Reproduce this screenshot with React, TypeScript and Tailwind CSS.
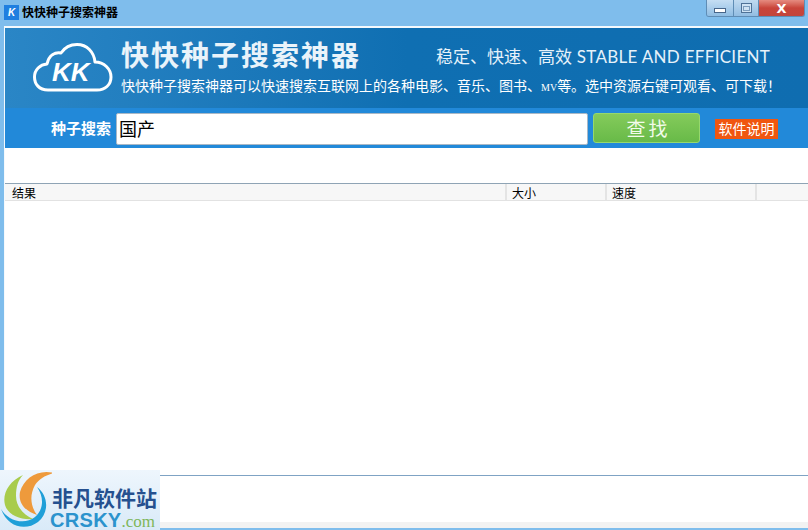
import { useState } from 'react';

const cjk = "font-['Liberation_Sans','Noto_Sans_CJK_SC',sans-serif]";

function CloudLogo() {
  return (
    <svg width="80" height="52" viewBox="0 0 80 52" fill="none" className="mt-[2px]">
      <path
        d="M15 47 C6 47 1.500 41 1.500 34 C1.500 27 7 21.500 14 21 C16 12 22 9 28 10 C32 4 38 1.500 44 1.500 C54 1.500 61 9 62 19 C71 19 78 26 78 34 C78 42 72 47 64 47 Z"
        stroke="white"
        strokeWidth="3"
        strokeLinejoin="round"
      />
      <text x="19" y="38" fill="white" fontSize="26" fontWeight="700" fontStyle="italic" fontFamily="Liberation Sans">
        KK
      </text>
    </svg>
  );
}

function WindowButtons() {
  return (
    <div className="flex h-[17px] border border-t-0 border-[#5f8db5] rounded-b-[3px] overflow-hidden">
      <div className="w-[27px] bg-gradient-to-b from-[#c5def3] to-[#8fbde3] flex items-center justify-center border-r border-[#5f8db5]">
        <div className="w-[12px] h-[5px] mt-[4px] bg-white border border-[#47668a]" />
      </div>
      <div className="w-[25px] bg-gradient-to-b from-[#c0daf0] to-[#92bde2] flex items-center justify-center border-r border-[#5f8db5]">
        <div className="w-[11px] h-[10px] border border-[#4f7297] bg-[#cfe3f4] flex items-center justify-center">
          <div className="w-[7px] h-[5px] border border-[#7d9dbd]" />
        </div>
      </div>
      <div className="w-[45px] bg-gradient-to-b from-[#e58b80] via-[#c9443a] to-[#c2453c] flex items-center justify-center">
        <span className="text-white text-[13px] font-bold leading-none font-['DejaVu_Sans',sans-serif]">X</span>
      </div>
    </div>
  );
}

function Watermark() {
  return (
    <div className="absolute left-0 bottom-0 w-[160px] h-[60px] bg-gradient-to-b from-[#eef6fd] to-[#d9eaf8] flex">
      <svg width="52" height="60" viewBox="0 0 52 60" className="shrink-0">
        <path d="M23 5 C9 11 2 24 5 35 C8 45 20 50 33 49 C24 45 16 37 16 26 C16 17 18 10 23 5 Z" fill="#a8cc4c" />
        <path d="M54 3 C38 -1 24 8 20 22 C18 33 25 41 37 45 C31 37 29 26 35 15 C39 9 46 5 54 3 Z" fill="#ee9a3c" />
        <path d="M37 17 C48 25 50 42 38 52 C26 61 8 58 1 39 C7 50 24 56 35 47 C44 39 44 27 37 17 Z" fill="#1f9fd8" />
      </svg>
      <div className="flex flex-col items-start pt-[17px]">
        <span className={`text-[#25508f] text-[21px] leading-[24px] font-bold whitespace-nowrap ${cjk}`}>非凡软件站</span>
        <div className="flex items-baseline leading-[18px] whitespace-nowrap font-['Liberation_Sans',sans-serif] -ml-[2px]">
          <span className="text-[#2b93cd] text-[20px] font-bold tracking-[0.3px]">CRSKY</span>
          <span className="text-[#7fb65a] text-[17px] font-['Liberation_Serif',serif]">.com</span>
        </div>
      </div>
    </div>
  );
}

export default function App() {
  const [query, setQuery] = useState('国产');

  return (
    <div className={`relative w-[808px] h-[530px] bg-[#7fbdec] flex flex-col overflow-hidden ${cjk}`}>
      {/* title bar */}
      <div className="h-[26px] shrink-0 flex items-start justify-between pl-[4px]">
        <div className="flex items-center h-[25px] gap-[3px]">
          <div className="w-[15px] h-[15px] bg-[#1f7fe0] flex items-center justify-center text-white text-[10px] font-bold italic">K</div>
          <span className="text-black text-[12px] font-bold whitespace-nowrap">快快种子搜索神器</span>
        </div>
        <div className="mr-[3px]">
          <WindowButtons />
        </div>
      </div>

      <div className="flex-1 flex flex-col ml-[4px] border-l border-t-2 border-[#f4f9fd] bg-white min-h-0">
        {/* banner */}
        <div className="h-[80px] shrink-0 bg-gradient-to-r from-[#2a86c6] via-[#0f6fb2] to-[#0f6db0] flex items-center pl-[28px]">
          <CloudLogo />
          <div className="ml-[8px] flex flex-col">
            <div className="flex items-center h-[34px] pt-[2px]">
              <span className="text-[#e9f3fa] text-[28px] leading-none font-bold tracking-[2px] whitespace-nowrap w-[315px]">快快种子搜索神器</span>
              <span className="text-[#e6f2fa] text-[17px] leading-none whitespace-nowrap">稳定、快速、高效 <span className="text-[17px] tracking-[0.3px] font-['Lato',sans-serif]">STABLE AND EFFICIENT</span></span>
            </div>
            <span className="text-white text-[14px] leading-[20px] mt-[3px] whitespace-nowrap">
              快快种子搜索神器可以快速搜索互联网上的各种电影、音乐、图书、<span className="text-[10px] font-['Liberation_Serif',serif]">MV</span>等。选中资源右键可观看、可下载！
            </span>
          </div>
        </div>

        {/* search bar */}
        <div className="h-[40px] shrink-0 bg-[#2289d9] flex items-center pt-[2px]">
          <span className="w-[106px] text-right text-white text-[15px] font-bold whitespace-nowrap">种子搜索</span>
          <input
            value={query}
            onChange={(e) => setQuery(e.target.value)}
            className="ml-[5px] w-[472px] h-[32px] bg-white border border-[#a9b8c6] rounded-[2px] pl-[2px] pb-[2px] text-[18px] text-black outline-none"
          />
          <button className="ml-[5px] -mt-[2px] w-[107px] h-[30px] pl-[4px] pt-[2px] rounded-[3px] border border-[#96d86c] bg-gradient-to-b from-[#84cb5b] to-[#68ba48] text-[#f2fbea] text-[19px] tracking-[3px]">
            查找
          </button>
          <div className="ml-[15px] -mt-[1px] w-[63px] h-[20px] bg-[#f0560f] text-white text-[14px] leading-[20px] text-center whitespace-nowrap">
            软件说明
          </div>
        </div>

        <div className="h-[35px] shrink-0 bg-white" />

        {/* result list */}
        <div className="h-[18px] shrink-0 flex border-t border-b border-t-[#8fa4b5] border-b-[#e2e2e2] bg-[#f7f7f7] text-[12px] leading-[20px] text-black">
          <div className="w-[502px] pl-[7px] border-r-2 border-[#e4e4e4]">结果</div>
          <div className="w-[100px] pl-[5px] border-r-2 border-[#e4e4e4]">大小</div>
          <div className="w-[150px] pl-[5px] border-r-2 border-[#e4e4e4]">速度</div>
          <div className="flex-1" />
        </div>
        <div className="flex-1 bg-white min-h-0" />

        {/* status area */}
        <div className="h-[53px] shrink-0 flex flex-col bg-white border-t border-[#7fa3c4]">
          <div className="flex-1" />
          <div className="h-[6px] bg-[#f2f2f2]" />
        </div>
      </div>

      <div className="h-[2px] shrink-0 bg-[#7fbdec]" />
      <Watermark />
    </div>
  );
}
